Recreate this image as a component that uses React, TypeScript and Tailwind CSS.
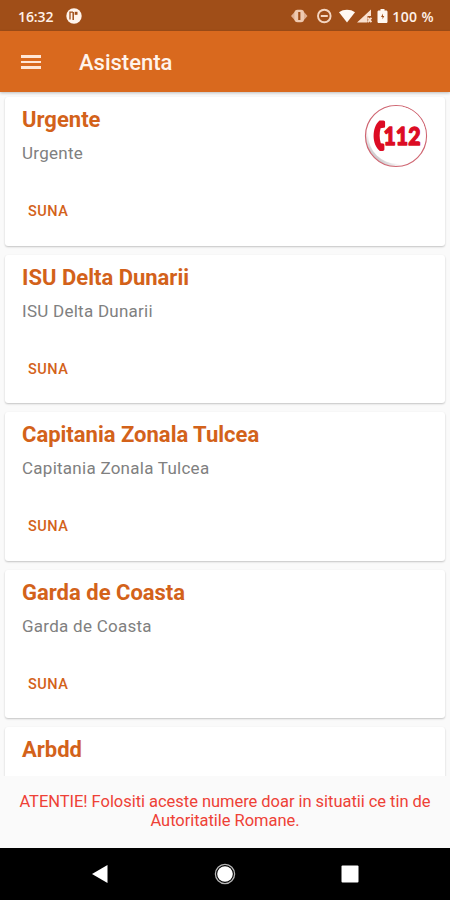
interface Contact {
  name: string;
  description?: string;
  emergency?: boolean;
}

const contacts: Contact[] = [
  { name: 'Urgente', description: 'Urgente', emergency: true },
  { name: 'ISU Delta Dunarii', description: 'ISU Delta Dunarii' },
  { name: 'Capitania Zonala Tulcea', description: 'Capitania Zonala Tulcea' },
  { name: 'Garda de Coasta', description: 'Garda de Coasta' },
  { name: 'Arbdd' },
];

const StatusBar = () => (
  <div className="flex h-[31px] shrink-0 items-center bg-[#a04e18] pt-px pr-[16px] pl-[18px] text-[#fff1e8]">
    <span className="w-12 font-['Open_Sans',sans-serif] text-[14px] font-semibold tracking-[-0.1px] whitespace-nowrap">16:32</span>
    <svg className="h-4 w-4" viewBox="0 0 16 16">
      <circle cx="8" cy="8" r="7.7" fill="#fff4ec" />
      <path d="M4 11.500V4.200h3" fill="none" stroke="#a04e18" strokeWidth="1.300" />
      <path d="M7.200 4v8" stroke="#a04e18" strokeWidth="1.500" />
      <path d="M8.700 3.800h2.800v3H8.700z" fill="#a04e18" />
    </svg>
    <div className="grow" />
    {/* Vibrate, do not disturb, wifi, mobile signal, battery */}
    <svg className="h-4 w-[100px]" viewBox="0 0 100 16">
      <path d="M0 8 4 3.500v9zM16.500 8l-4-4.500v9z" fill="#dfae90" />
      <rect x="3.500" y="1.800" width="9.500" height="12.400" rx="3" fill="#efc9b0" />
      <path d="M8.300 4v8" stroke="#a04e18" strokeWidth="2.200" />
      <g fill="none" stroke="#f4d5c1">
        <circle cx="33.300" cy="8" r="6.300" strokeWidth="1.900" />
        <path d="M29.800 8h7" strokeWidth="2" />
      </g>
      <path d="M48 4.200c4.500-3.300 11.500-3.300 16 0L56 14.600z" fill="#fff8f2" />
      <path d="M66 14.600 80 1.500v6.500h-3.500v6.600z" fill="#f9dfce" />
      <path d="m77 9.700 3.400 4.400m0-4.400L77 14.100" stroke="#f9dfce" strokeWidth="1.800" />
      <path d="M89.500 2.500V1h4v1.500h1.700c.7 0 1.300.6 1.300 1.300v9.900c0 .7-.6 1.300-1.300 1.300h-7.400c-.7 0-1.300-.6-1.300-1.300V3.800c0-.7.6-1.300 1.300-1.300z" fill="#fff8f2" />
      <path d="M92 5.500 90 9h1.500v2.300L93.300 8h-1.400z" fill="#a04e18" />
    </svg>
    <span className="ml-px font-['Open_Sans',sans-serif] text-[14px] font-semibold tracking-[0.400px] whitespace-nowrap">100 %</span>
  </div>
);

const AppBar = () => (
  <header className="relative z-10 flex h-[61px] shrink-0 items-center bg-[#d9691e] pl-[21px] text-[#fff3eb] shadow-[0_1px_3px_rgba(0,0,0,0.25)]">
    <button className="flex w-[58px] flex-col gap-[3px] pt-px" aria-label="Menu">
      <span className="h-[2.500px] w-5 bg-[#ffe6d6]" />
      <span className="h-[2.500px] w-5 bg-[#ffe6d6]" />
      <span className="h-[2.500px] w-5 bg-[#ffe6d6]" />
    </button>
    <h1 className="pt-px text-[22px] font-medium">Asistenta</h1>
  </header>
);

const EmergencyLogo = () => (
  <svg className="-mt-0.5 -mr-px h-16 w-16" viewBox="0 0 64 64">
    <defs>
      <linearGradient id="rim" x1="0" y1="1" x2="1" y2="0">
        <stop offset="0.1" stopColor="#b9b4b8" />
        <stop offset="0.3" stopColor="#ffffff" />
      </linearGradient>
    </defs>
    <circle cx="32" cy="32" r="30.500" fill="url(#rim)" stroke="#cf6672" strokeWidth="1.200" />
    <circle cx="33" cy="31" r="28.800" fill="#fff" />
    <path
      d="M15.500 16.500h3.800c1.200 0 1.800.7 1.800 1.800v3.900c0 1-.6 1.500-1.500 1.600l-3 .5c-1.300 4.300-1.300 10.500.2 15l2.300.3c.9.100 1.300.7 1.300 1.600v4c0 1.100-.7 1.700-1.800 1.700h-2.800C7.800 40.500 7.500 23.500 15.500 16.500z"
      fill="#dc0c24"
    />
    <text x="19.500" y="41" textLength="37" lengthAdjust="spacingAndGlyphs" fill="#dc0c24" stroke="#dc0c24" strokeWidth="1.300" strokeLinejoin="round" className="font-['Lato',sans-serif] text-[24.500px] font-black">
      112
    </text>
  </svg>
);

const ContactCard = ({ name, description, emergency }: Contact) => (
  <article className="flex h-[148.500px] shrink-0 justify-between rounded-[3px] bg-white pt-[9px] pr-[18px] pl-[17px] shadow-[0_1px_2px_rgba(0,0,0,0.22)]">
    <div className="flex flex-col items-start">
      <h2 className="text-[22px] leading-7 font-bold text-[#d3621a]">{name}</h2>
      {description && (
        <>
          <p className="mt-[7px] text-[17px] leading-6 tracking-[0.260px] text-[#808080]">{description}</p>
          <button className="mt-[37px] ml-1.5 text-[14.500px] leading-5 font-medium tracking-[0.500px] text-[#d3621a]">SUNA</button>
        </>
      )}
    </div>
    {emergency && <EmergencyLogo />}
  </article>
);

const NavigationBar = () => (
  <nav className="flex h-[52px] shrink-0 items-center justify-center bg-black">
    <svg className="h-6 w-[270px]" viewBox="0 0 270 24">
      <path d="M2 12 17.500 3v18z" fill="#fff" />
      <circle cx="135" cy="12" r="9.600" fill="none" stroke="#b5b5b5" strokeWidth="1.300" />
      <circle cx="135" cy="12" r="7.800" fill="#fff" />
      <rect x="251.500" y="3.500" width="17" height="17" rx="1" fill="#fff" />
    </svg>
  </nav>
);

const App = () => (
  <div className="flex h-[900px] w-[450px] flex-col overflow-hidden bg-[#fafafa] font-['Roboto',sans-serif]">
    <StatusBar />
    <AppBar />
    <main className="flex h-[684px] shrink-0 flex-col gap-[9px] overflow-hidden px-[5px] pt-[5px]">
      {contacts.map((contact) => (
        <ContactCard key={contact.name} {...contact} />
      ))}
    </main>
    <footer className="h-[72px] shrink-0 px-3 pt-[15.500px] text-center text-[16.500px] leading-[19.500px] tracking-[-0.040px] text-[#ee4136]">
      ATENTIE! Folositi aceste numere doar in situatii ce tin de Autoritatile Romane.
    </footer>
    <NavigationBar />
  </div>
);

export default App;
